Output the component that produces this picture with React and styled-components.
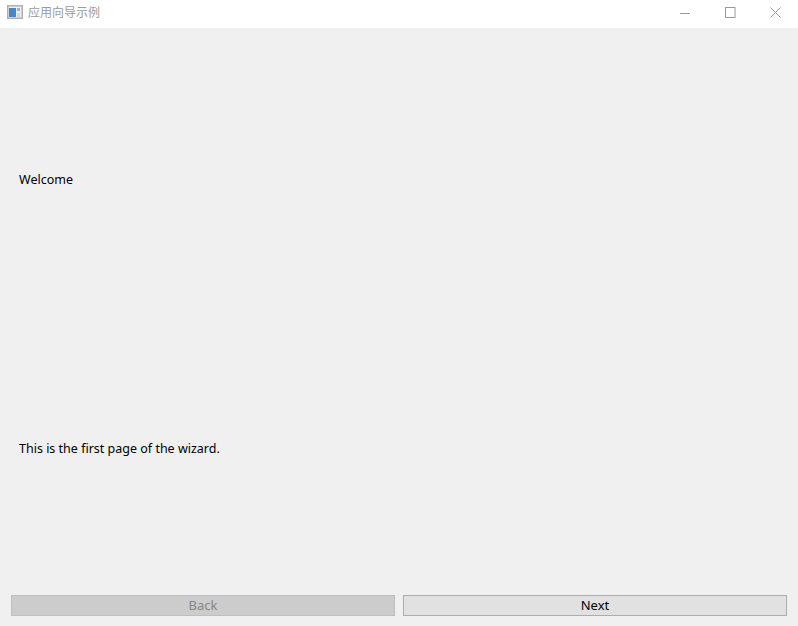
import styled, { createGlobalStyle } from "styled-components"

const GlobalStyle = createGlobalStyle`
html, body {
  margin: 0;
  padding: 0;
  background: #f0f0f0;
}
* {
  box-sizing: border-box;
}
`;

const Window = styled.div`
width: 798px;
height: 626px;
display: flex;
flex-direction: column;
background: #f0f0f0;
color: #000;
font-family: "Noto Sans", "Noto Sans CJK SC", sans-serif;
font-size: 13px;
overflow: hidden;
`;

const TitleBar = styled.div`
height: 28px;
flex: none;
display: flex;
align-items: center;
background: #fff;
padding-left: 7px;
`;

const AppIcon = styled.svg`
width: 16px;
height: 16px;
margin-right: 5px;
margin-top: -2px;
`;

const Title = styled.span`
flex: 1;
color: #9c9c9c;
font-family: "Noto Sans CJK SC", sans-serif;
font-size: 12px;
line-height: 16px;
margin-top: -4px;
`;

const WinButton = styled.div`
width: 45px;
height: 28px;
display: flex;
align-items: center;
justify-content: center;
color: #999;
padding-bottom: 4px;
`;

const Page = styled.div`
flex: 1;
display: flex;
flex-direction: column;
padding: 0 19px;
`;

const Row = styled.div`
height: ${props => props.height}px;
display: flex;
align-items: center;
font-size: 12.5px;
`;

const Footer = styled.div`
flex: none;
display: flex;
gap: 8px;
padding: 0 11px 10px;
`;

const Button = styled.div`
flex: 1;
height: 21px;
display: flex;
align-items: center;
justify-content: center;
border: 1px solid ${props => props.disabled ? "#bfbfbf" : "#adadad"};
background: ${props => props.disabled ? "#cccccc" : "#e1e1e1"};
color: ${props => props.disabled ? "#8a8580" : "#000"};
line-height: 19px;
`;

function App() {
  return (
    <Window>
      <GlobalStyle />
      <TitleBar>
        <AppIcon viewBox="0 0 16 16">
          <rect x="0.75" y="0.75" width="14.5" height="12.5" fill="#eceef0" stroke="#b0b0b0" strokeWidth="1.5" />
          <rect x="2" y="3" width="7" height="9" fill="#4a86c8" />
          <rect x="10" y="3" width="3" height="3" fill="#9db4cc" />
          <rect x="10" y="8" width="3" height="4" fill="#d5d9dd" />
        </AppIcon>
        <Title>应用向导示例</Title>
        <WinButton>
          <svg width="11" height="11" viewBox="0 0 11 11">
            <path d="M0 6.5h10" stroke="currentColor" fill="none" />
          </svg>
        </WinButton>
        <WinButton>
          <svg width="11" height="11" viewBox="0 0 11 11">
            <rect x="0.5" y="0.5" width="9.5" height="10" stroke="currentColor" fill="none" />
          </svg>
        </WinButton>
        <WinButton>
          <svg width="11" height="11" viewBox="0 0 11 11">
            <path d="M0.5 0.5l10 10M10.5 0.5l-10 10" stroke="currentColor" fill="none" />
          </svg>
        </WinButton>
      </TitleBar>
      <Page>
        <Row height={303}>Welcome</Row>
        <Row height={234}>This is the first page of the wizard.</Row>
      </Page>
      <Footer>
        <Button disabled>Back</Button>
        <Button>Next</Button>
      </Footer>
    </Window>
  )
}

export default App
